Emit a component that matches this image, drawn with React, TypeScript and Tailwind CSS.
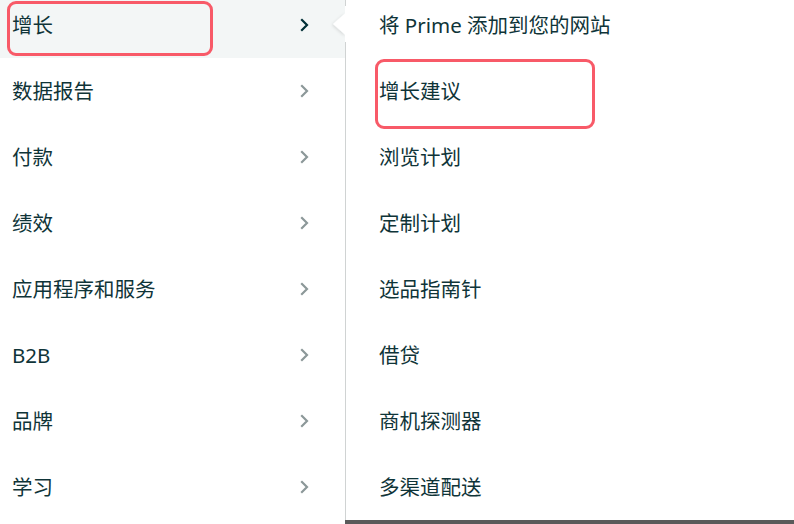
const leftItems = ['增长', '数据报告', '付款', '绩效', '应用程序和服务', 'B2B', '品牌', '学习'];
const rightItems = [
  '将 Prime 添加到您的网站',
  '增长建议',
  '浏览计划',
  '定制计划',
  '选品指南针',
  '借贷',
  '商机探测器',
  '多渠道配送',
];

function Chevron({ active }: { active: boolean }) {
  return (
    <svg width="10" height="14" viewBox="0 0 10 14" fill="none">
      <path
        d="M2 2l5 5-5 5"
        stroke={active ? '#002f36' : '#8c9899'}
        strokeWidth={2.2}
        strokeLinecap="square"
      />
    </svg>
  );
}

export default function App() {
  return (
    <div
      className="relative flex w-[794px] h-[524px] overflow-hidden bg-white text-[#0f3438]"
      style={{ fontFamily: '"Noto Sans", "Noto Sans CJK SC", sans-serif' }}
    >
      <div className="w-[345px] shrink-0 flex flex-col -mt-[8px]">
        {leftItems.map((item, i) => (
          <div
            key={item}
            className={`h-[66px] shrink-0 flex items-center justify-between pl-3 pr-[35px] text-[20.5px] ${
              i === 0 ? 'bg-[#f3f6f6]' : ''
            }`}
          >
            <span>{item}</span>
            <Chevron active={i === 0} />
          </div>
        ))}
      </div>

      <div className="flex-1 flex flex-col">
        <div className="h-[520px] border-l border-[#d0d3d3] overflow-hidden">
          <div className="flex flex-col -mt-[8px]">
            {rightItems.map((item) => (
              <div key={item} className="h-[66px] shrink-0 flex items-center pl-[33px] text-[20.5px]">
                {item}
              </div>
            ))}
          </div>
        </div>
        <div className="flex-1 bg-[#5a5a5a]" />
      </div>

      {/* pointer */}
      <svg className="absolute left-[326px] top-[6px]" width="26" height="36" viewBox="0 0 26 36">
        <defs>
          <filter id="sh" x="-50%" y="-50%" width="200%" height="200%">
            <feDropShadow dx="-1" dy="1" stdDeviation="1.5" floodColor="#000" floodOpacity="0.12" />
          </filter>
        </defs>
        <polygon points="19.5,7 7,18 19.5,29" fill="#fff" filter="url(#sh)" />
        <rect x="19" y="0" width="7" height="36" fill="#fff" />
      </svg>

      {/* highlight boxes */}
      <div className="absolute left-[7px] top-[1px] w-[206px] h-[55px] rounded-[9px] border-[3px] border-[#f85a68]" />
      <div className="absolute left-[375px] top-[59px] w-[220px] h-[70px] rounded-[9px] border-[3px] border-[#f85a68]" />
    </div>
  );
}
